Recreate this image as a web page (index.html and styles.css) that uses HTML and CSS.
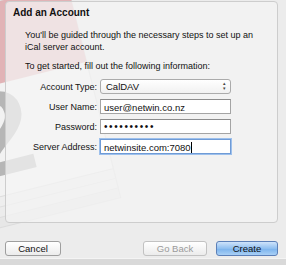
FILE: index.html
```html
<!DOCTYPE html>
<html lang="en">
<head>
  <meta charset="UTF-8">
  <title>Add an Account</title>
  <link rel="stylesheet" href="styles.css">
</head>
<body>
  <div class="window">
    <!-- faded iCal artwork behind the panel -->
    <svg class="watermark" width="140" height="230" viewBox="0 0 140 230" aria-hidden="true">
      <g transform="rotate(-14 60 120)">
        <rect x="-60" y="196" width="160" height="14" fill="#e4e4e4" stroke="#cfcfcf"/>
        <rect x="-60" y="186" width="160" height="14" fill="#ececec" stroke="#d2d2d2"/>
        <rect x="-60" y="176" width="160" height="14" fill="#f0f0f0" stroke="#d4d4d4"/>
        <rect x="-60" y="-10" width="160" height="190" fill="#f7f7f7" stroke="#d0d0d0"/>
        <rect x="-60" y="-10" width="160" height="80" fill="#d9868a"/>
        <text x="-36" y="160" class="big-two">2</text>
      </g>
    </svg>

    <div class="panel">
      <div class="panel-title">Add an Account</div>
      <div class="panel-body">
        <p class="intro first">You'll be guided through the necessary steps to set up an iCal server account.</p>
        <p class="intro">To get started, fill out the following information:</p>
        <div class="form">
          <label>Account Type:</label>
          <div class="select">CalDAV<span class="arrows">&#9652;<br>&#9662;</span></div>
          <label>User Name:</label>
          <div class="field">user@netwin.co.nz</div>
          <label>Password:</label>
          <div class="field dots">••••••••••</div>
          <label>Server Address:</label>
          <div class="field focus">netwinsite.com:7080<span class="caret"></span></div>
        </div>
      </div>
    </div>

    <div class="buttons">
      <button class="btn">Cancel</button>
      <span class="spacer"></span>
      <button class="btn disabled">Go Back</button>
      <button class="btn primary">Create</button>
    </div>
  </div>
  <div class="footer"></div>
</body>
</html>
```

FILE: styles.css
```css
body {
  margin: 0;
  width: 286px;
  height: 265px;
  overflow: hidden;
  background: #ececec;
  font-family: "Liberation Sans", Arial, sans-serif;
  font-size: 9px;
  color: #111;
}
.window {
  position: relative;
  height: 258px;
  padding: 1px 8px 0 5px;
  box-sizing: border-box;
}
.watermark {
  position: absolute;
  left: 0;
  top: 0;
  opacity: 0.55;
}
.big-two {
  font-family: "Liberation Sans", Arial, sans-serif;
  font-weight: bold;
  font-size: 120px;
  fill: #8a8a8a;
}
.panel {
  position: relative;
  height: 222px;
  box-sizing: border-box;
  border: 1px solid #cdcdcd;
  border-radius: 4px;
  background: rgba(244, 244, 244, 0.72);
  padding-top: 5px;
}
.panel-title {
  font-weight: bold;
  font-size: 10px;
  line-height: 12px;
  padding-left: 7px;
}
.panel-body {
  padding: 10px 0 0 19px;
}
.intro {
  margin: 0 0 9px 0;
  line-height: 12px;
  width: 245px;
}
.intro.first {
  margin-bottom: 7px;
}
.form {
  display: grid;
  grid-template-columns: 73px 131px;
  column-gap: 3px;
  row-gap: 5px;
  margin-top: -2px;
  margin-left: -1px;
  align-items: center;
}
.form label {
  text-align: right;
  color: #111;
}
.field, .select {
  height: 15px;
  line-height: 15px;
  box-sizing: border-box;
  background: #fff;
  border: 1px solid #a4a4a4;
  border-top-color: #8c8c8c;
  padding-left: 3px;
  font-size: 9.5px;
}
.select {
  position: relative;
  border-radius: 3px;
  line-height: 13px;
  background: linear-gradient(#ffffff, #f1f1f1);
  padding-left: 5px;
  border-color: #ababab;
}
.arrows {
  position: absolute;
  right: 4px;
  top: 1px;
  font-size: 5px;
  line-height: 5px;
  color: #444;
}
.field.dots {
  font-size: 10px;
  line-height: 13px;
  letter-spacing: 1.6px;
}
.focus {
  border-color: #6f9bd6;
  box-shadow: 0 0 0 1px #9dc0ec;
}
.caret {
  display: inline-block;
  width: 1px;
  height: 11px;
  background: #000;
  vertical-align: -2px;
}
.buttons {
  display: flex;
  margin-top: 18px;
  gap: 9px;
}
.spacer {
  flex: 1;
}
.btn {
  height: 15px;
  padding: 0;
  font-family: "Liberation Sans", Arial, sans-serif;
  font-size: 9.5px;
  color: #111;
  border: 1px solid #9e9e9e;
  border-radius: 3px;
  background: linear-gradient(#ffffff, #ececec);
  width: 56px;
}
.btn.disabled {
  width: 64px;
  color: #9a9a9a;
  border-color: #c2c2c2;
}
.btn.primary {
  width: 62px;
  border-color: #5c80b8;
  background: linear-gradient(#cfe3fa, #8fbff0 50%, #7ab2ec 51%, #a9d0f6);
}
.footer {
  height: 7px;
  background: #d9d9d9;
  border-top: 1px solid #f4f4f4;
}
```
